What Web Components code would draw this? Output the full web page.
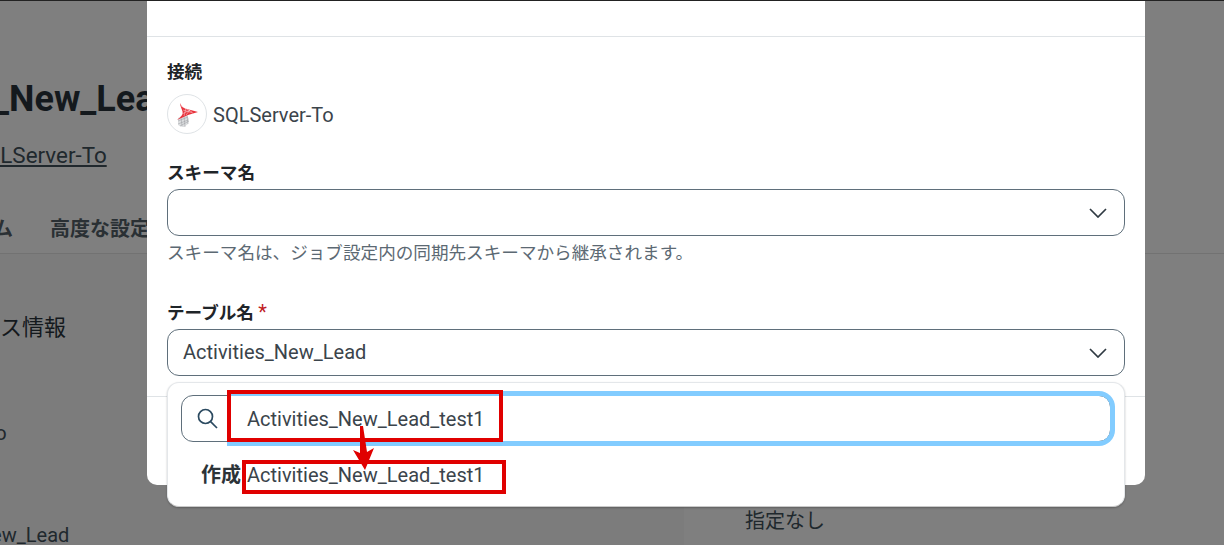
<!DOCTYPE html>
<html lang="ja">
<head>
<meta charset="utf-8">
<title>テーブル設定</title>
<style>
  html, body { margin: 0; height: 100%; overflow: hidden; }
  body { background: #7f7f7f; font-family: Roboto, "Noto Sans CJK JP", sans-serif; }
</style>
</head>
<body>
<job-page>
  <span slot="title">Activities_New_Lead</span>
  <span slot="link">SQLServer-To</span>
</job-page>
<table-modal></table-modal>

<script>
class jobPage extends HTMLElement{
    constructor(){
        super();
        this.attachShadow({mode: 'open'});
    }
    connectedCallback(){
        this.shadowRoot.innerHTML = `
            <style>
                :host{
                    display: block;
                    width: 1224px;
                    height: 545px;
                    overflow: hidden;
                    border-top: 1px solid #222;
                    box-sizing: border-box;
                    color: #14191d;
                    background: #7f7f7f;
                }
                header{
                    height: 253px;
                    border-bottom: 1px solid #727272;
                    box-sizing: border-box;
                    margin-left: -159px;
                    padding-top: 78px;
                }
                h1{
                    margin: 0;
                    font-size: 36px;
                    line-height: 40px;
                    font-weight: 700;
                    white-space: nowrap;
                }
                a{
                    display: inline-block;
                    margin-top: 23px;
                    margin-left: 130.6px;
                    font-size: 22.4px;
                    line-height: 26px;
                    color: #20282d;
                    text-decoration: underline;
                }
                nav{
                    display: flex;
                    gap: 37px;
                    margin-top: 49px;
                    margin-left: 159px;
                    font-size: 20px;
                    line-height: 24px;
                    font-weight: 700;
                    color: #2a3034;
                    white-space: nowrap;
                }
                nav span:first-child{ margin-left: -7px; }
                .body{
                    display: grid;
                    grid-template-columns: 684px 1fr;
                    height: 292px;
                    background: #7c7c7c;
                }
                .left{
                    padding-top: 59px;
                    font-size: 22px;
                    line-height: 30px;
                    white-space: nowrap;
                }
                .left div{
                    font-size: 20px;
                    line-height: 26px;
                    color: #20282d;
                    margin: 76.500px 0 0 -114px;
                }
                .right{
                    background: #7f7f7f;
                    padding: 254px 0 0 61px;
                    font-size: 20px;
                    line-height: 26px;
                    color: #20282d;
                }
            </style>
            <header>
                <h1><slot name="title"></slot></h1>
                <a><slot name="link"></slot></a>
                <nav><span>ム</span><span>高度な設定</span></nav>
            </header>
            <div class="body">
                <div class="left">
                    <span>ス情報</span>
                    <div>SQLServer-To</div>
                    <div>Activities_New_Lead</div>
                </div>
                <div class="right">指定なし</div>
            </div>
        `;
    }
}
customElements.define('job-page', jobPage);

class selectBox extends HTMLElement{
    constructor(){
        super();
        this.attachShadow({mode: 'open'});
    }
    connectedCallback(){
        this.shadowRoot.innerHTML = `
            <style>
                :host{
                    display: flex;
                    align-items: center;
                    justify-content: space-between;
                    height: 47px;
                    box-sizing: border-box;
                    padding: 0 17px 0 15px;
                    border: 1px solid #5f6f7b;
                    border-radius: 12px;
                    background: #fff;
                    font-size: 20px;
                    color: #3b444b;
                }
                span{ padding-bottom: 2px; }
                svg{ display: block; }
            </style>
            <span><slot></slot></span>
            <svg width="18" height="10" viewBox="0 0 18 10" fill="none" stroke="#2f3a42" stroke-width="1.7">
                <path d="M1 1l8 8 8-8"/>
            </svg>
        `;
    }
}
customElements.define('select-box', selectBox);

class formField extends HTMLElement{
    constructor(){
        super();
        this.attachShadow({mode: 'open'});
    }
    connectedCallback(){
        this.shadowRoot.innerHTML = `
            <style>
                :host{ display: block; }
                label{
                    display: block;
                    font-size: 17.6px;
                    line-height: 24px;
                    font-weight: 700;
                    color: #1f2529;
                    margin-bottom: 4px;
                }
                .hint{
                    font-size: 17.6px;
                    line-height: 24px;
                    color: #5c6973;
                    margin-top: 5px;
                }
            </style>
            <label><slot name="label"></slot></label>
            <slot></slot>
            <div class="hint"><slot name="hint"></slot></div>
        `;
    }
}
customElements.define('form-field', formField);

class searchDropdown extends HTMLElement{
    constructor(){
        super();
        this.attachShadow({mode: 'open'});
    }
    connectedCallback(){
        this.shadowRoot.innerHTML = `
            <style>
                :host{
                    position: absolute;
                    left: 167px;
                    top: 382px;
                    width: 958px;
                    height: 125px;
                    box-sizing: border-box;
                    background: #fff;
                    border: 1px solid #e4e7ea;
                    border-bottom-color: #c9c9c9;
                    border-radius: 12px;
                    padding: 12px 13px 0 13px;
                    box-shadow: 0 1px 2px rgba(0,0,0,.25);
                    font-size: 20px;
                    color: #3b444b;
                }
                .search{
                    display: flex;
                    align-items: center;
                    gap: 29px;
                    height: 47px;
                    box-sizing: border-box;
                    padding-left: 15px;
                    border: 1px solid #5f6f7b;
                    border-radius: 12px;
                    position: relative;
                }
                .search::after{
                    content: "";
                    position: absolute;
                    left: 45px;
                    right: -5px;
                    top: -5px;
                    bottom: -5px;
                    border: 5px solid #82ccff;
                    border-left: 0;
                    border-radius: 0 16px 16px 0;
                }
                svg{ display: block; flex: none; }
                .create{
                    display: flex;
                    align-items: center;
                    gap: 6px;
                    margin: 20px 0 0 20px;
                    line-height: 26px;
                }
                b{ font-size: 20px; color: #2c3338; }
            </style>
            <div class="search">
                <svg width="21" height="21" viewBox="0 0 21 21" fill="none" stroke="#2b4a60" stroke-width="1.7">
                    <circle cx="8.500" cy="8.500" r="7"/>
                    <path d="M13.600 13.600L20 20"/>
                </svg>
                <span><slot></slot></span>
            </div>
            <div class="create"><b>作成</b><span><slot name="create"></slot></span></div>
        `;
    }
}
customElements.define('search-dropdown', searchDropdown);

class noteMarks extends HTMLElement{
    constructor(){
        super();
        this.attachShadow({mode: 'open'});
    }
    connectedCallback(){
        this.shadowRoot.innerHTML = `
            <style>
                :host{ position: absolute; left: 0; top: 0; width: 0; height: 0; }
                i{
                    position: absolute;
                    box-sizing: border-box;
                    border: 4px solid #e00000;
                }
                svg{ position: absolute; left: 350px; top: 425px; }
            </style>
            <i style="left:227px;top:390px;width:276px;height:52px"></i>
            <i style="left:242px;top:460px;width:264px;height:34px"></i>
            <svg width="28" height="46" viewBox="0 0 28 46">
                <path d="M10 1h3l4 26 7-4-9 22-12-20 7 3z" fill="#e00000"/>
            </svg>
        `;
    }
}
customElements.define('note-marks', noteMarks);

class tableModal extends HTMLElement{
    constructor(){
        super();
        this.attachShadow({mode: 'open'});
    }
    connectedCallback(){
        this.shadowRoot.innerHTML = `
            <style>
                :host{
                    position: absolute;
                    left: 147px;
                    top: 0;
                    width: 998px;
                    height: 485px;
                    box-sizing: border-box;
                    background: #fff;
                    border-radius: 0 0 10px 10px;
                    font-family: Roboto, "Noto Sans CJK JP", sans-serif;
                }
                .head{
                    height: 37px;
                    box-sizing: border-box;
                    border-top: 1px solid #222;
                    border-bottom: 1px solid #dfe3e6;
                }
                .content{
                    padding: 23px 20px 0;
                }
                .conn-label{
                    font-size: 17.6px;
                    line-height: 24px;
                    font-weight: 700;
                    color: #1f2529;
                }
                .conn{
                    display: flex;
                    align-items: center;
                    gap: 6px;
                    margin-top: 10px;
                    font-size: 20px;
                    color: #3b444b;
                }
                .conn span:last-child{ padding-top: 2px; }
                .logo{
                    width: 40px;
                    height: 40px;
                    box-sizing: border-box;
                    border: 1px solid #dfe3e6;
                    border-radius: 50%;
                    display: flex;
                    align-items: center;
                    justify-content: center;
                }
                form-field{ margin-top: 27px; }
                form-field + form-field{ margin-top: 36px; }
                .star{ color: #c0201f; font-weight: 400; font-size: 20px; line-height: 0; }
                .foot{
                    position: absolute;
                    left: 0; right: 0;
                    top: 396px;
                    border-top: 1px solid #dfe3e6;
                }
            </style>
            <div class="head"></div>
            <div class="content">
                <div class="conn-label">接続</div>
                <div class="conn">
                    <span class="logo">
                        <svg width="24" height="26" viewBox="0 0 24 26" fill="none">
                            <path d="M3 17l8-4 3 5-1 5-4 3c-3 0-6-1-6-3z" fill="#dcdee0"/>
                            <path d="M3 20l10-4M3 23l10-4M5 25l9-5M6 16l1 9M9 15l1 11M12 14l1 9" stroke="#9a9da0" stroke-width=".5"/>
                            <path d="M5 2c1 3 3 5 7 6l11 3-10 3-11 5c4-3 7-6 5-10-1-3-2-5-2-7z" fill="#e8323c"/>
                            <path d="M6 5l11 6M8 9l10 3M11 7l-2 8M15 9l-4 5M7 13l8-4" stroke="#fff" stroke-width=".4"/>
                        </svg>
                    </span>
                    <span>SQLServer-To</span>
                </div>
                <form-field>
                    <span slot="label">スキーマ名</span>
                    <select-box></select-box>
                    <span slot="hint">スキーマ名は、ジョブ設定内の同期先スキーマから継承されます。</span>
                </form-field>
                <form-field>
                    <span slot="label">テーブル名 <span class="star">*</span></span>
                    <select-box>Activities_New_Lead</select-box>
                </form-field>
            </div>
            <div class="foot"></div>
        `;
    }
}
customElements.define('table-modal', tableModal);

const drop = document.createElement('search-dropdown');
drop.innerHTML = 'Activities_New_Lead_test1<span slot="create">Activities_New_Lead_test1</span>';
document.body.appendChild(drop);
document.body.appendChild(document.createElement('note-marks'));
</script>
</body>
</html>
